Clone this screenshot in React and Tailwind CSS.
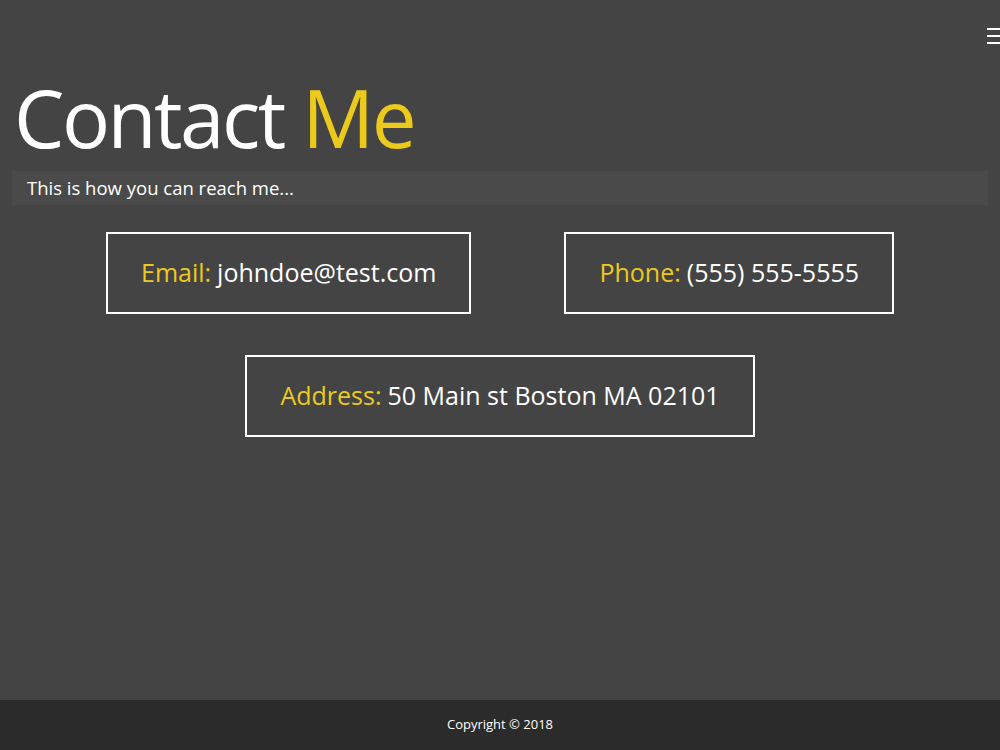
export default function App() {
  const font = { fontFamily: '"Open Sans", "Noto Sans", sans-serif' };

  return (
    <div className="min-h-screen flex flex-col bg-[#444444] text-white overflow-hidden" style={font}>
      <header className="flex justify-end h-[77px] overflow-hidden">
        <button aria-label="Menu" className="flex flex-col gap-[5px] pt-[28px] -mr-[8px] w-[21px] shrink-0">
          <span className="block h-[2px] bg-white" />
          <span className="block h-[2px] bg-white" />
          <span className="block h-[2px] bg-white" />
        </button>
      </header>

      <main className="flex-1 px-[12px]">
        <h1 className="text-[80px] leading-none pl-[2px] tracking-[-2.5px]">
          Contact <span className="text-[#ecca1c]">Me</span>
        </h1>
        <p className="mt-[14px] bg-[#4a4a4a] h-[34px] flex items-center px-[15px] text-[18.5px]">
          This is how you can reach me...
        </p>

        <div className="flex justify-center gap-[93px] mt-[27px]">
          <ContactBox label="Email:" value="johndoe@test.com" />
          <ContactBox label="Phone:" value="(555) 555-5555" />
        </div>
        <div className="flex justify-center mt-[41px]">
          <ContactBox label="Address:" value="50 Main st Boston MA 02101" />
        </div>
      </main>

      <footer className="bg-[#2b2b2b] h-[50px] flex items-center justify-center text-[13px]">
        Copyright © 2018
      </footer>
    </div>
  );
}

function ContactBox({ label, value }) {
  return (
    <div className="border-2 border-white px-[33px] h-[82px] flex items-center text-[25px]">
      <span className="text-[#ecca1c]">{label}</span>
      <span className="ml-[6px]">{value}</span>
    </div>
  );
}
